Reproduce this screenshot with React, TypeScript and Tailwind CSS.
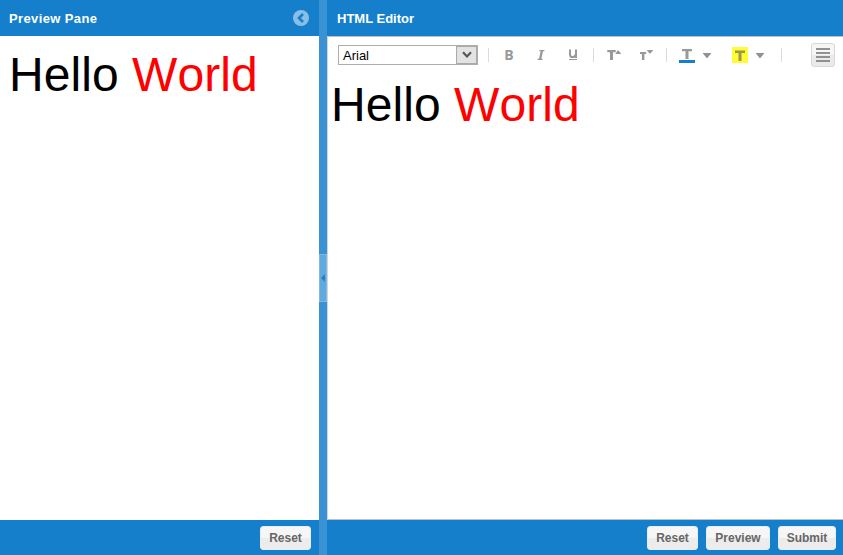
import type { ReactNode } from "react";

const Separator = () => <div className="h-[14px] w-px shrink-0 bg-[#dcdcdc]" />;

function IconButton({ label, className, children }: { label: string; className: string; children: ReactNode }) {
  return (
    <button aria-label={label} className={`flex h-5 shrink-0 items-center justify-center text-[#999] ${className}`}>
      {children}
    </button>
  );
}

function Caret({ className }: { className: string }) {
  return (
    <svg className={`shrink-0 ${className}`} width="8" height="5" viewBox="0 0 8 5" fill="#929292">
      <path d="M0 0H8V0.6L4.4 5H3.6L0 0.6Z" />
    </svg>
  );
}

function ActionButton({ className, children }: { className: string; children: ReactNode }) {
  return (
    <button
      className={`h-6 rounded-[3px] border border-[#e8edf1] bg-linear-to-b from-[#f6f6f6] from-50% to-[#ececec] to-50% text-[12px] leading-[22px] font-bold text-[#666] ${className}`}
    >
      {children}
    </button>
  );
}

function HelloWorld() {
  return (
    <div className="text-[48px] leading-[55px] tracking-[0.05px] whitespace-nowrap text-black [font-kerning:none]">
      Hello <span className="text-[#f00]">World</span>
    </div>
  );
}

function Toolbar() {
  return (
    <div className="flex h-[36px] shrink-0 items-center pl-[10px]">
      <button className="flex h-5 w-[140px] shrink-0 items-stretch border border-[#abadb3] bg-white text-left text-[13px] leading-[19px] text-black">
        <span className="flex-1 pl-1">Arial</span>
        <span className="flex w-[21px] items-center justify-center border border-[#aaa] bg-[#e3e3e3]">
          <svg width="10" height="8" viewBox="0 0 10 8" fill="none" stroke="#555" strokeWidth="2.2">
            <path d="M1 1.2L5 5.4L9 1.2" />
          </svg>
        </span>
      </button>
      <div className="w-[10px] shrink-0" />
      <Separator />
      <IconButton label="Bold" className="ml-[10px] w-5">
        <span className="font-['Open_Sans',sans-serif] text-[14px] leading-5 font-bold">B</span>
      </IconButton>
      <IconButton label="Italic" className="ml-3 w-5">
        <svg width="20" height="20" viewBox="0 0 20 20" fill="none" stroke="currentColor">
          <path strokeWidth="1.2" d="M8.4 5.6H13.4M6.6 14.4H11.5" />
          <path strokeWidth="2.3" d="M11 5.5L9 14.5" />
        </svg>
      </IconButton>
      <IconButton label="Underline" className="ml-3 w-5">
        <svg width="20" height="20" viewBox="0 0 20 20" fill="none" stroke="currentColor">
          <path strokeWidth="2" d="M7 4.5V9.4C7 11.2 7.8 12 9.5 12C11.2 12 12.4 11.2 12.4 9.4M13 4.5V13" />
          <path strokeWidth="1" d="M6 14.5H14" />
        </svg>
      </IconButton>
      <div className="w-[10px] shrink-0" />
      <Separator />
      <IconButton label="Increase font size" className="ml-[10px] w-5">
        <svg width="20" height="20" viewBox="0 0 20 20" fill="currentColor">
          <path d="M3.3 5H11.7V7.2H9V15H6V7.2H3.3ZM11.5 9V8.4L13.8 5.3H14.2L17 8.4V9Z" />
        </svg>
      </IconButton>
      <IconButton label="Decrease font size" className="ml-3 w-5">
        <svg width="20" height="20" viewBox="0 0 20 20" fill="currentColor">
          <path d="M4 7H10.3V9H8.4V15H5.9V9H4ZM11 5H17V5.6L14.2 8.8H13.8L11 5.6Z" />
        </svg>
      </IconButton>
      <div className="w-[10px] shrink-0" />
      <Separator />
      <IconButton label="Text color" className="ml-[10px] w-5">
        <svg width="20" height="20" viewBox="0 0 20 20">
          <path fill="currentColor" d="M5 4H15V6.3H11.5V14H8.5V6.3H5Z" />
          <path fill="#157fcc" d="M2 15H18V18H2Z" />
        </svg>
      </IconButton>
      <Caret className="ml-[6px]" />
      <IconButton label="Highlight color" className="ml-[21px] w-4">
        <svg className="shrink-0" width="16" height="16" viewBox="0 0 16 16">
          <path fill="#fffb35" d="M0 0H16V16H0Z" />
          <path fill="#98984e" d="M3 3.5H13V6H9.5V14H6.5V6H3Z" />
        </svg>
      </IconButton>
      <Caret className="ml-2" />
      <div className="w-[17px] shrink-0" />
      <Separator />
      <button
        aria-label="Alignment"
        className="mr-2 ml-auto flex h-6 w-6 shrink-0 items-center justify-center rounded-[3px] border border-[#d8d8d8] bg-linear-to-b from-[#f6f6f6] from-50% to-[#eaeaea] to-50%"
      >
        <svg width="14" height="14" viewBox="0 0 14 14" fill="#919191">
          <path d="M0 0H14V2H0ZM0 4H14V6H0ZM0 8H14V10H0ZM0 12H14V14H0Z" />
        </svg>
      </button>
    </div>
  );
}

export default function App() {
  return (
    <div className="flex h-screen w-full overflow-hidden bg-white font-['Liberation_Sans',Arial,sans-serif]">
      <section className="flex w-[319px] shrink-0 flex-col">
        <header className="flex h-9 shrink-0 items-center justify-between bg-[#157fcc] pr-[10px] pl-[9px] text-[13px] font-bold text-white">
          <h2 className="pt-px tracking-[0.38px]">Preview Pane</h2>
          <button aria-label="Collapse preview">
            <svg width="16" height="16" viewBox="0 0 16 16">
              <circle cx="8" cy="8" r="8" fill="#8abfe5" />
              <path d="M10 4L6 8L10 12" fill="none" stroke="#157fcc" strokeWidth="2.6" />
            </svg>
          </button>
        </header>
        <main className="flex-1 pt-[11px] pl-[9px]">
          <HelloWorld />
        </main>
        <footer className="flex h-[35px] shrink-0 items-center justify-end bg-[#157fcc] pt-px pr-2">
          <ActionButton className="w-[51px]">Reset</ActionButton>
        </footer>
      </section>

      <div className="flex w-2 shrink-0 items-center bg-[#3892d4]">
        <button
          aria-label="Resize panes"
          className="flex h-12 w-2 items-center justify-center border border-[#7eb9e5] bg-[#5fa9df]"
        >
          <svg className="shrink-0" width="4" height="8" viewBox="0 0 4 8" fill="#257fc3">
            <path d="M4 0V8L0 4Z" />
          </svg>
        </button>
      </div>

      <section className="flex min-w-0 flex-1 flex-col">
        <header className="flex h-9 shrink-0 items-center bg-[#157fcc] pl-[10px] text-[13px] font-bold text-white">
          <h2 className="pt-px">HTML Editor</h2>
        </header>
        <main className="flex min-h-0 flex-1 flex-col border-y border-l border-[#c0c0c0] border-l-[#d5d5d5]">
          <Toolbar />
          <div className="flex-1 pt-1 pl-[3px]">
            <HelloWorld />
          </div>
        </main>
        <footer className="flex h-[35px] shrink-0 items-center justify-end gap-2 bg-[#157fcc] pt-px pr-[7px]">
          <ActionButton className="w-[51px]">Reset</ActionButton>
          <ActionButton className="w-16">Preview</ActionButton>
          <ActionButton className="w-[58px]">Submit</ActionButton>
        </footer>
      </section>
    </div>
  );
}
